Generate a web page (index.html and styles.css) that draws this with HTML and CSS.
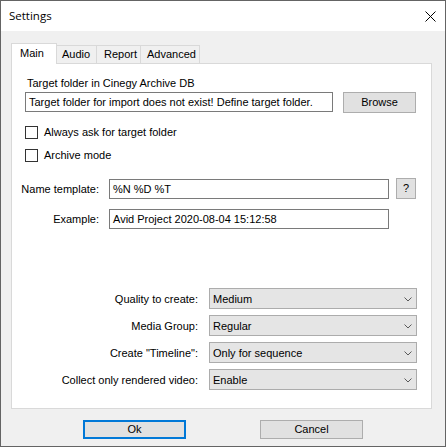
FILE: index.html
```html
<!DOCTYPE html>
<html>
<head>
<meta charset="utf-8">
<link rel="stylesheet" href="styles.css">
</head>
<body>
<div class="window">
  <div class="titlebar">
    <span class="title">Settings</span>
    <svg class="close" width="11" height="11" viewBox="0 0 11 11"><path d="M0.5 0.5 L10.5 10.5 M10.5 0.5 L0.5 10.5" stroke="#000" stroke-width="1" fill="none"/></svg>
  </div>
  <div class="content">
    <div class="tabs">
      <div class="tab tab-main active">Main</div>
      <div class="tab tab-audio">Audio</div>
      <div class="tab tab-report">Report</div>
      <div class="tab tab-adv">Advanced</div>
    </div>
    <div class="panel">
      <div class="folder-label">Target folder in Cinegy Archive DB</div>
      <div class="folder-row">
        <div class="textbox folder-box">Target folder for import does not exist! Define target folder.</div>
        <div class="button browse">Browse</div>
      </div>
      <div class="check-row first"><span class="checkbox"></span><span>Always ask for target folder</span></div>
      <div class="check-row second"><span class="checkbox"></span><span>Archive mode</span></div>

      <div class="field-row name-row">
        <div class="field-label"><span>Name template:</span></div>
        <div class="textbox field-box">%N %D %T</div>
        <div class="button help">?</div>
      </div>
      <div class="field-row example-row">
        <div class="field-label"><span>Example:</span></div>
        <div class="textbox field-box">Avid Project 2020-08-04 15:12:58</div>
      </div>

      <div class="selects">
        <div class="select-row">
          <div class="select-label">Quality to create:</div>
          <div class="select"><span>Medium</span><svg width="8" height="5" viewBox="0 0 8 5"><path d="M0.5 0.5 L4 4 L7.5 0.5" stroke="#5a5a5a" fill="none"/></svg></div>
        </div>
        <div class="select-row">
          <div class="select-label">Media Group:</div>
          <div class="select"><span>Regular</span><svg width="8" height="5" viewBox="0 0 8 5"><path d="M0.5 0.5 L4 4 L7.5 0.5" stroke="#5a5a5a" fill="none"/></svg></div>
        </div>
        <div class="select-row">
          <div class="select-label">Create "Timeline":</div>
          <div class="select"><span>Only for sequence</span><svg width="8" height="5" viewBox="0 0 8 5"><path d="M0.5 0.5 L4 4 L7.5 0.5" stroke="#5a5a5a" fill="none"/></svg></div>
        </div>
        <div class="select-row">
          <div class="select-label">Collect only rendered video:</div>
          <div class="select"><span>Enable</span><svg width="8" height="5" viewBox="0 0 8 5"><path d="M0.5 0.5 L4 4 L7.5 0.5" stroke="#5a5a5a" fill="none"/></svg></div>
        </div>
      </div>
    </div>
    <div class="footer">
      <div class="button footer-btn default">Ok</div>
      <div class="button footer-btn">Cancel</div>
    </div>
  </div>
</div>
</body>
</html>
```
FILE: styles.css
```css
html, body {
  margin: 0;
  padding: 0;
  background: #ffffff;
}
body {
  font-family: "Liberation Sans", Arial, sans-serif;
  font-size: 11px;
  color: #000;
}
.window {
  width: 446px;
  height: 447px;
  box-sizing: border-box;
  border: 1px solid #646464;
  background: #f0f0f0;
  display: flex;
  flex-direction: column;
}
.titlebar {
  height: 30px;
  flex: none;
  background: #fff;
  display: flex;
  align-items: center;
  justify-content: space-between;
  padding: 0 9px 0 8px;
}
.title {
  font-family: "Open Sans", "Noto Sans", sans-serif;
  font-size: 11.5px;
  margin-top: -1px;
}
.close {
  margin-top: 1px;
}
.content {
  padding: 12px 0 0 10px;
  display: flex;
  flex-direction: column;
}
.tabs {
  display: flex;
  align-items: flex-end;
  height: 20px;
}
.tab {
  box-sizing: border-box;
  height: 18px;
  border: 1px solid #d9d9d9;
  border-bottom: none;
  background: #f0f0f0;
  padding-left: 5px;
  line-height: 17px;
  margin-left: -1px;
  white-space: nowrap;
}
.tab.active {
  height: 21px;
  margin-bottom: -1px;
  margin-left: 0;
  background: #fff;
  position: relative;
  z-index: 1;
  padding-left: 8px;
  line-height: 18px;
}
.tab-main { width: 46px; }
.tab-audio { width: 41px; }
.tab-report { width: 45px; padding-left: 7px; }
.tab-adv { width: 60px; padding-left: 6px; }

.panel {
  width: 421px;
  height: 346px;
  box-sizing: border-box;
  border: 1px solid #d9d9d9;
  background: #fff;
  padding: 0 14px 0 13px;
  display: flex;
  flex-direction: column;
}
.folder-label {
  margin-top: 13px;
  height: 13px;
  line-height: 13px;
  padding-left: 2px;
}
.folder-row {
  margin-top: 2px;
  display: flex;
  align-items: flex-start;
  justify-content: space-between;
}
.textbox {
  box-sizing: border-box;
  height: 20px;
  border: 1px solid #7a7a7a;
  background: #fff;
  line-height: 18px;
  padding-left: 3px;
  white-space: nowrap;
  overflow: hidden;
}
.folder-box {
  width: 308px;
}
.button {
  box-sizing: border-box;
  background: #e1e1e1;
  border: 1px solid #adadad;
  text-align: center;
}
.browse {
  width: 73px;
  height: 21px;
  line-height: 19px;
  margin-right: 1px;
}
.check-row {
  display: flex;
  align-items: center;
  height: 13px;
  line-height: 13px;
}
.check-row.first { margin-top: 13px; }
.check-row.second { margin-top: 10px; }
.checkbox {
  width: 13px;
  height: 13px;
  box-sizing: border-box;
  border: 1px solid #333;
  background: #fff;
  margin-right: 6px;
  flex: none;
}
.field-row {
  display: flex;
  align-items: flex-start;
}
.name-row { margin-top: 16px; }
.example-row { margin-top: 9px; }
.field-label {
  width: 74px;
  flex: none;
  display: flex;
  justify-content: flex-end;
  white-space: nowrap;
  margin-right: 10px;
  height: 20px;
  line-height: 20px;
  margin-top: 1px;
}
.field-box {
  width: 280px;
  margin-top: 1px;
}
.help {
  width: 20px;
  height: 21px;
  line-height: 19px;
  margin-left: 7px;
}
.selects {
  margin-top: 59px;
  display: flex;
  flex-direction: column;
  gap: 6px;
}
.select-row {
  display: flex;
  align-items: center;
  height: 21px;
}
.select-label {
  width: 173px;
  text-align: right;
  margin-right: 11px;
  white-space: nowrap;
}
.select {
  box-sizing: border-box;
  width: 208px;
  height: 21px;
  background: #e5e5e5;
  border: 1px solid #acacac;
  display: flex;
  align-items: center;
  justify-content: space-between;
  padding: 0 4px 0 3px;
}
.select svg {
  margin-top: 1px;
}
.footer {
  display: flex;
  justify-content: center;
  gap: 74px;
  margin-top: 11px;
  margin-left: -10px;
}
.footer-btn {
  width: 103px;
  height: 19px;
  line-height: 17px;
}
.footer-btn.default {
  border: 2px solid #0078d7;
  line-height: 15px;
}
```
